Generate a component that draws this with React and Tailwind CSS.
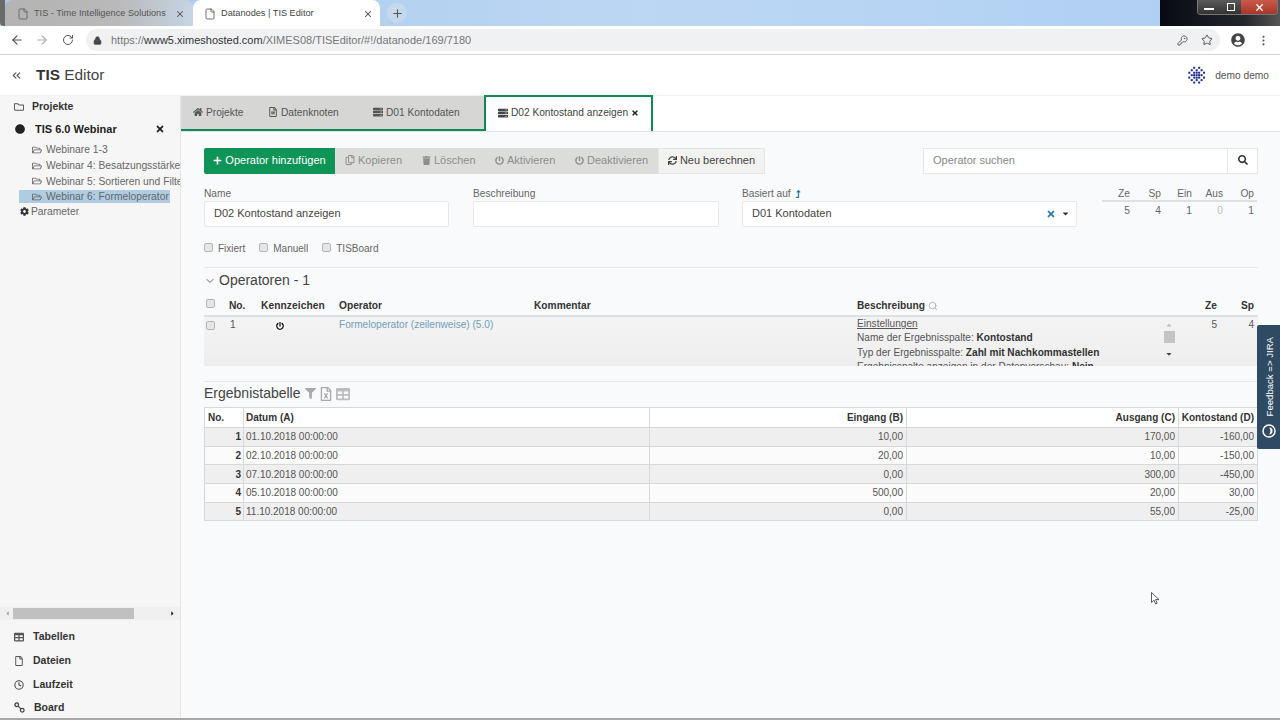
import React from 'react';
import { ArrowLeft, ArrowRight, RotateCw, Lock, KeyRound, Star, MoreVertical, File, Plus, X, ChevronsLeft, ChevronDown, Search, Clock } from 'lucide-react';
import {
  FaHome, FaTimes, FaPlus, FaRegCopy, FaTrash, FaPowerOff, FaSync, FaSearch, FaFilter, FaCog, FaCaretDown, FaCaretLeft, FaCaretRight, FaCaretUp,
  FaRegFolder, FaRegFolderOpen, FaRegFile, FaRegFileAlt, FaServer, FaUserCircle, FaCircle, FaRegFileExcel, FaTable, FaLevelUpAlt,
} from 'react-icons/fa';

const projectItems = [
  { label: 'Webinare 1-3' },
  { label: 'Webinar 4: Besatzungsstärke' },
  { label: 'Webinar 5: Sortieren und Filtern' },
  { label: 'Webinar 6: Formeloperator', active: true },
];

const resultRows = [
  ['1', '01.10.2018 00:00:00', '10,00', '170,00', '-160,00'],
  ['2', '02.10.2018 00:00:00', '20,00', '10,00', '-150,00'],
  ['3', '07.10.2018 00:00:00', '0,00', '300,00', '-450,00'],
  ['4', '05.10.2018 00:00:00', '500,00', '20,00', '30,00'],
  ['5', '11.10.2018 00:00:00', '0,00', '55,00', '-25,00'],
];

const stats = [
  ['Ze', '5'],
  ['Sp', '4'],
  ['Ein', '1'],
  ['Aus', '0'],
  ['Op', '1'],
];

const Logo = () => {
  const dots = [];
  for (let i = 0; i < 7; i++) {
    for (let j = 0; j < 7; j++) {
      const d = Math.hypot(i - 3, j - 3);
      if (d < 3.6 && (i + j) % 2 === 0 || d < 1.6) {
        dots.push(<rect key={`${i}-${j}`} x={i * 2.6 + 0.3} y={j * 2.6 + 0.3} width="2.1" height="2.1" fill="#1b2a8c" />);
      }
    }
  }
  return <svg width="18" height="19" viewBox="0 0 19 19">{dots}</svg>;
};

const BoardIcon = () => (
  <svg width="11" height="11" viewBox="0 0 12 12" fill="none" stroke="#444" strokeWidth="1.4">
    <circle cx="3" cy="3" r="2" />
    <circle cx="9" cy="9" r="2" />
    <path d="M4.5 4.5 L7.5 7.5" />
  </svg>
);

const JiraIcon = () => (
  <svg width="14" height="14" viewBox="0 0 14 14" fill="none">
    <circle cx="7" cy="7" r="6" stroke="#fff" strokeWidth="1.5" />
    <path d="M7 3.5 A3.5 3.5 0 0 1 7 10.5 A5 5 0 0 0 7 3.5Z" fill="#fff" />
  </svg>
);

const Checkbox = () => (
  <span className="inline-block w-[9px] h-[9px] rounded-[2px] border border-[#b5b5b5] bg-[#e6e6e6]" />
);

const BrowserBar = () => (
  <div className="shrink-0">
    <div className="h-[26px] flex bg-[linear-gradient(90deg,#a9c8ea,#bcd7f4_50%,#aecff2)]">
      <div className="w-[5px] bg-[#6a6a6a] rounded-bl" />
      <div className="w-[188px] flex items-center pl-[12px] pr-[5px] pt-[1px] rounded-t-lg bg-[linear-gradient(90deg,#b3b3b3,#b9b9b9_60%,#c6d4e4)] text-[9.2px] text-[#555]">
        <File size={12} strokeWidth={1.5} className="mr-[5px] shrink-0" />
        <span className="flex-1 whitespace-nowrap">TIS - Time Intelligence Solutions</span>
        <X size={10} className="mr-[3px]" strokeWidth={2.5} />
      </div>
      <div className="w-[187px] flex items-center pl-[11px] pr-[7px] pt-[1px] rounded-t-lg bg-white text-[9.2px] text-[#444]">
        <File size={12} strokeWidth={1.5} className="mr-[5px] shrink-0" />
        <span className="flex-1 whitespace-nowrap">Datanodes | TIS Editor</span>
        <X size={10} strokeWidth={2.5} />
      </div>
      <div className="ml-[7px] mt-[3px] w-[20px] h-[20px] rounded-full bg-[#c6d9ec] flex items-center justify-center text-[#555]">
        <Plus size={13} strokeWidth={2} />
      </div>
      <div className="ml-auto w-[120px] bg-[linear-gradient(90deg,#070a10,#23262b_70%,#555)] flex justify-end">
        <div className="flex h-[15px] mr-[2px] rounded-b border border-t-0 border-[#777] overflow-hidden">
          <div className="w-[22px] bg-[linear-gradient(180deg,#5a5a5a,#333)] flex items-center justify-center"><span className="block w-[10px] h-[2px] mt-[4px] bg-white" /></div>
          <div className="w-[21px] bg-[linear-gradient(180deg,#5a5a5a,#333)] flex items-center justify-center"><span className="block w-[8px] h-[8px] border border-white" /></div>
          <div className="w-[36px] bg-[linear-gradient(180deg,#c95a4b,#a8372a)] flex items-center justify-center text-white"><X size={11} strokeWidth={3} /></div>
        </div>
      </div>
    </div>
    <div className="h-[29px] flex items-center bg-white border-b border-[#d4d4d4] text-[#555]">
      <ArrowLeft size={14} className="ml-[10px]" />
      <ArrowRight size={14} className="ml-[11px] text-[#aaa]" />
      <RotateCw size={12} className="ml-[13px]" />
      <div className="ml-[12px] w-[1134px] h-[22px] rounded-full bg-[#f0f1f3] flex items-center pl-[7px] pr-[7px]">
        <Lock size={9} fill="#444" className="text-[#444]" />
        <span className="ml-[9px] text-[11px] text-[#777] whitespace-nowrap">
          https://<span className="text-[#333]">www5.ximeshosted.com</span>/XIMES08/TISEditor/#!/datanode/169/7180
        </span>
        <KeyRound size={11} className="ml-auto" />
        <Star size={12} className="ml-[13px]" />
      </div>
      <FaUserCircle size={14} className="ml-[11px] text-[#444]" />
      <MoreVertical size={13} className="ml-[12px]" />
    </div>
  </div>
);

const Sidebar = () => (
  <aside className="w-[181px] shrink-0 flex flex-col bg-[#f6f6f6] border-r border-[#e4e4e4]">
    <div className="flex-1 min-h-0 overflow-hidden">
      <div className="pl-[14px] h-[21px] flex items-center gap-[8px] text-[10.5px] font-bold text-[#333]">
        <FaRegFolder size={10} className="text-[#555] shrink-0" />
        <span>Projekte</span>
      </div>
      <div className="pl-[15px] pr-[15px] h-[24px] flex items-center text-[11px] font-bold text-[#222]">
        <FaCircle size={10} className="shrink-0 text-[#222]" />
        <span className="ml-[10px] flex-1">TIS 6.0 Webinar</span>
        <FaTimes size={10} />
      </div>
      <div className="mt-[1px]">
        {projectItems.map((item) => (
          <div key={item.label} className="h-[15.7px] pl-[19px] flex items-center text-[10.3px] text-[#666] whitespace-nowrap overflow-hidden">
            <span className={`h-[13px] pl-[13px] pr-[1px] flex items-center gap-[4px] ${item.active ? 'bg-[#aecde3]' : ''}`}>
              <FaRegFolderOpen size={10} className="shrink-0" />
              {item.label}
            </span>
          </div>
        ))}
      </div>
      <div className="pl-[20px] h-[14px] flex items-center gap-[2px] text-[10.3px] text-[#666]">
        <FaCog size={9} className="text-[#333]" />
        Parameter
      </div>
    </div>
    <div className="h-[13px] shrink-0 flex items-center justify-between px-[4px] bg-[#f0f0f0]">
      <FaCaretLeft size={7} className="text-[#aaa]" />
      <div className="absolute ml-[9px] w-[121px] h-[11px] bg-[#c0c0c0]" />
      <FaCaretRight size={7} className="text-[#333]" />
    </div>
    <nav className="mt-[5px] shrink-0 flex flex-col text-[10.5px] font-bold text-[#333]">
      <div className="h-[24px] pl-[14px] flex items-center gap-[9px]"><FaTable size={10} className="text-[#555]" />Tabellen</div>
      <div className="h-[24px] pl-[14px] flex items-center gap-[9px]"><FaRegFile size={10} className="text-[#555]" />Dateien</div>
      <div className="h-[24px] pl-[14px] flex items-center gap-[9px]"><Clock size={10} strokeWidth={2.5} className="text-[#444]" />Laufzeit</div>
      <div className="h-[21px] pl-[14px] flex items-center gap-[9px]"><BoardIcon />Board</div>
    </nav>
  </aside>
);

const Tabs = () => (
  <div className="h-[36px] flex items-stretch border-b border-[#e2e2e2] bg-white text-[10.2px] text-[#555] shrink-0">
    <div className="w-[303px] flex items-center bg-[#d6d6d4] border-b-[2px] border-[#108a55] pl-[12px]">
      <span className="w-[75px] flex items-center gap-[3px]"><FaHome size={10} />Projekte</span>
      <span className="w-[105px] flex items-center gap-[3px]"><FaRegFileAlt size={10} />Datenknoten</span>
      <span className="flex items-center gap-[3px]"><FaServer size={10} />D01 Kontodaten</span>
    </div>
    <div className="w-[169px] -mt-[1px] pb-[3px] flex items-center justify-center gap-[3px] bg-white border-2 border-b-0 border-[#108a55] text-[#444]">
      <FaServer size={10} />D02 Kontostand anzeigen
      <FaTimes size={8} className="text-[#222]" />
    </div>
  </div>
);

const Toolbar = () => (
  <div className="flex h-[26px] text-[11px]">
    <button className="w-[131px] pb-[2px] flex items-center justify-center gap-[3px] rounded-l-[2px] bg-[#0f9457] text-white">
      <FaPlus size={9} />Operator hinzufügen
    </button>
    <div className="w-[323px] pb-[2px] flex items-center bg-[#dcdcdb] text-[#8e8e8e]">
      <span className="ml-[10px] w-[77px] flex items-center gap-[3px]"><FaRegCopy size={10} />Kopieren</span>
      <span className="w-[73px] flex items-center gap-[3px]"><FaTrash size={9} />Löschen</span>
      <span className="w-[80px] flex items-center gap-[3px]"><FaPowerOff size={9} />Aktivieren</span>
      <span className="flex items-center gap-[3px]"><FaPowerOff size={9} />Deaktivieren</span>
    </div>
    <button className="w-[107px] pb-[2px] flex items-center justify-center gap-[3px] bg-[#f2f2f1] border border-[#e6e6e6] text-[#444]">
      <FaSync size={9} />Neu berechnen
    </button>
    <div className="ml-auto w-[335px] flex bg-white border border-[#e6e6e6]">
      <div className="flex-1 pb-[2px] flex items-center pl-[9px] text-[#888]">Operator suchen</div>
      <div className="w-[30px] pb-[2px] flex items-center justify-center border-l border-[#e6e6e6] text-[#333]"><FaSearch size={10} /></div>
    </div>
  </div>
);

const Field = ({ label, value, className, children }) => (
  <div className={className}>
    <div className="h-[14px] flex items-center gap-[3px] text-[10.2px] text-[#666]">{label}</div>
    <div className="h-[26px] pb-[1px] flex items-center pl-[9px] pr-[6px] bg-white border border-[#e8e8e8] rounded-[2px] text-[11px] text-[#444]">
      <span className="flex-1">{value}</span>
      {children}
    </div>
  </div>
);

const Form = () => (
  <div className="mt-[13px] flex items-start">
    <Field label="Name" value="D02 Kontostand anzeigen" className="w-[245px]" />
    <Field label="Beschreibung" value="" className="ml-[24px] w-[246px]" />
    <Field
      label={<>Basiert auf <FaLevelUpAlt size={8} className="text-[#2b7fa8]" /></>}
      value="D01 Kontodaten"
      className="ml-[23px] w-[335px]"
    >
      <FaTimes size={10} className="text-[#2b7fa8]" />
      <FaCaretDown size={9} className="ml-[5px] text-[#333]" />
    </Field>
    <div className="ml-[25px] w-[155px] text-[10.2px] text-[#666]">
      <div className="h-[15px] flex border-b-[2px] border-[#dfe0e2]">
        {stats.map(([name]) => <span key={name} className="w-[31px] pr-[3px] text-right leading-[13px]">{name}</span>)}
      </div>
      <div className="mt-[1px] flex">
        {stats.map(([name, val]) => (
          <span key={name} className={`w-[31px] pr-[3px] text-right ${name === 'Aus' ? 'text-[#bbb]' : ''}`}>{val}</span>
        ))}
      </div>
    </div>
  </div>
);

const OPERATOR_COLS = 'grid grid-cols-[25px_32px_78px_195px_323px_303px_20px_37px_37px_3px]';

const Operators = () => (
  <section>
    <div className="mt-[11px] border-t border-[#e9e9e9] h-[26px] flex items-center text-[14px] text-[#444]">
      <ChevronDown size={12} className="mr-[3px] text-[#666]" />
      Operatoren - 1
    </div>
    <div className={`${OPERATOR_COLS} mt-[4px] h-[20px] items-center border-b-[2px] border-[#dfe0e2] text-[10.2px] font-bold text-[#333]`}>
      <span className="pl-[2px] -mt-[3px]"><Checkbox /></span>
      <span>No.</span>
      <span className="whitespace-nowrap tracking-[0.1px]">Kennzeichen</span>
      <span>Operator</span>
      <span>Kommentar</span>
      <span className="flex items-center gap-[3px]">Beschreibung <Search size={10} className="text-[#aaa]" /></span>
      <span />
      <span className="text-right">Ze</span>
      <span className="text-right">Sp</span>
      <span />
    </div>
    <div className={`${OPERATOR_COLS} h-[49px] overflow-hidden text-[10.1px] text-[#555] bg-[linear-gradient(180deg,#f3f3f3,#f0f0f0_70%,#ededed)]`}>
      <span className="pl-[2px] pt-[2px]"><Checkbox /></span>
      <span className="pl-[1px]">1</span>
      <span className="pl-[13px] pt-[3px]">
        <span className="flex w-[11px] h-[11px] items-center justify-center bg-[#f7f7f7] rounded-[2px] text-[#111]"><FaPowerOff size={8} /></span>
      </span>
      <span className="text-[#6f9fbd]">Formeloperator (zeilenweise) (5.0)</span>
      <span />
      <div className="leading-[14.3px] whitespace-nowrap">
        <div className="underline">Einstellungen</div>
        <div>Name der Ergebnisspalte: <b className="text-[#333]">Kontostand</b></div>
        <div>Typ der Ergebnisspalte: <b className="text-[#333]">Zahl mit Nachkommastellen</b></div>
        <div>Ergebnisspalte anzeigen in der Datenvorschau: <b className="text-[#333]">Nein</b></div>
      </div>
      <div className="flex flex-col items-center pt-[4px] pr-[2px]">
        <FaCaretUp size={8} className="text-[#bbb]" />
        <span className="mt-[2px] w-[11px] h-[12px] bg-[#c4c4c4]" />
        <FaCaretDown size={8} className="mt-[7px] text-[#444]" />
      </div>
      <span className="text-right">5</span>
      <span className="text-right">4</span>
      <span />
    </div>
    <div className="mt-[15px] border-t border-[#e9e9e9]" />
  </section>
);

const ResultTable = () => (
  <section>
    <div className="h-[25px] pb-[2px] flex items-center gap-[3px] text-[14px] text-[#444]">
      Ergebnistabelle
      <FaFilter size={11} className="ml-[1px] text-[#a9a9a9]" />
      <FaRegFileExcel size={14} className="text-[#a9a9a9]" />
      <FaTable size={14} className="text-[#bdbdbd]" />
    </div>
    <table className="table-fixed w-[1053px] border border-[#d8d8d8] border-collapse text-[10px] text-[#555]">
      <colgroup>
        <col className="w-[39px]" />
        <col className="w-[406px]" />
        <col className="w-[257px]" />
        <col className="w-[272px]" />
        <col className="w-[79px]" />
      </colgroup>
      <thead>
        <tr className="h-[20px] bg-white font-bold text-[#333]">
          <th className="pl-[3px] text-left border-r border-[#d8d8d8]">No.</th>
          <th className="pl-[2px] text-left border-r border-[#d8d8d8]">Datum (A)</th>
          <th className="pr-[3px] text-right border-r border-[#d8d8d8]">Eingang (B)</th>
          <th className="pr-[3px] text-right border-r border-[#d8d8d8]">Ausgang (C)</th>
          <th className="pr-[3px] text-right whitespace-nowrap">Kontostand (D)</th>
        </tr>
      </thead>
      <tbody>
        {resultRows.map((row, i) => (
          <tr key={row[0]} className={`h-[18.7px] border-t border-[#d8d8d8] ${i % 2 === 0 ? 'bg-[#efefef]' : 'bg-[#fbfbfb]'}`}>
            <td className="pr-[2px] text-right font-bold text-[#333] border-r border-[#d8d8d8]">{row[0]}</td>
            <td className="pl-[2px] border-r border-[#d8d8d8]">{row[1]}</td>
            <td className="pr-[3px] text-right border-r border-[#d8d8d8]">{row[2]}</td>
            <td className="pr-[3px] text-right border-r border-[#d8d8d8]">{row[3]}</td>
            <td className="pr-[3px] text-right">{row[4]}</td>
          </tr>
        ))}
      </tbody>
    </table>
  </section>
);

const App = () => (
  <div className="relative w-[1280px] h-[720px] overflow-hidden flex flex-col bg-white font-['Liberation_Sans',Arial,sans-serif]">
    <BrowserBar />

    <header className="h-[41px] shrink-0 pt-[1px] flex items-center bg-white text-[#555] border-b border-[#efefef]">
      <ChevronsLeft size={13} className="ml-[10px]" />
      <h1 className="ml-[13px] -mt-[1px] text-[15.4px] text-[#444]"><b className="text-[#333]">TIS</b> Editor</h1>
      <div className="ml-auto mr-[11px] flex items-center gap-[9px] text-[10.2px]">
        <Logo />
        demo demo
      </div>
    </header>

    <div className="flex-1 flex min-h-0">
      <Sidebar />
      <main className="flex-1 flex flex-col bg-[#f9fafb]">
        <Tabs />
        <div className="pt-[16px] pl-[23px] pr-[23px]">
          <Toolbar />
          <Form />
          <div className="mt-[14px] flex gap-[14px] text-[10px] text-[#666]">
            <label className="flex items-center gap-[5px]"><span className="-mt-[3px] flex"><Checkbox /></span>Fixiert</label>
            <label className="flex items-center gap-[5px]"><span className="-mt-[3px] flex"><Checkbox /></span>Manuell</label>
            <label className="flex items-center gap-[5px]"><span className="-mt-[3px] flex"><Checkbox /></span>TISBoard</label>
          </div>
          <Operators />
          <ResultTable />
        </div>
      </main>
    </div>
    <div className="h-[2px] shrink-0 bg-[#a8a8a8]" />

    {/* feedback tab sits over the page edge */}
    <div className="absolute right-0 top-[325px] w-[23px] h-[124px] flex flex-col items-center bg-[#2f4a63] rounded-l-[2px] text-white">
      <span className="mt-[12px] ml-[3px] [writing-mode:vertical-rl] rotate-180 text-[9.6px] whitespace-nowrap">Feedback =&gt; JIRA</span>
      <span className="mt-auto mb-[11px]"><JiraIcon /></span>
    </div>

    {/* mouse pointer from the recording */}
    <svg className="absolute left-[1151px] top-[592px]" width="9" height="13" viewBox="0 0 9 13">
      <path d="M0.5 0.5 V10.5 L3 8.2 L4.6 12 L6.2 11.3 L4.6 7.6 L8 7.6 Z" fill="#fff" stroke="#333" strokeWidth="0.8" />
    </svg>
  </div>
);

export default App;
